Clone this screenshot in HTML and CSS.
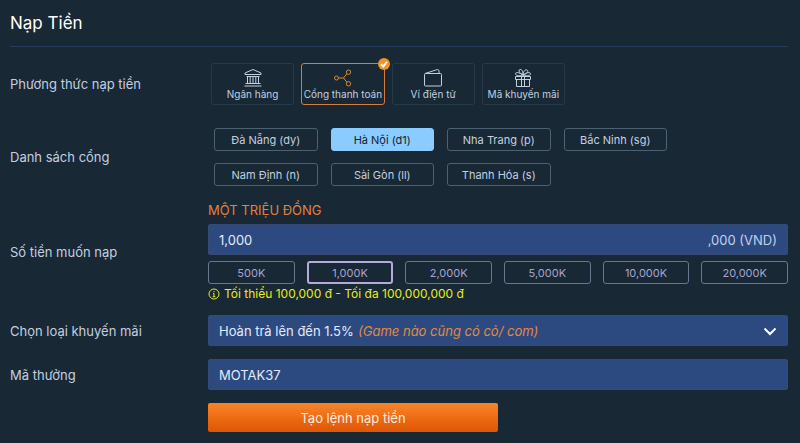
FILE: index.html
```html
<!DOCTYPE html>
<html lang="vi">
<head>
    <meta charset="UTF-8">
    <meta name="viewport" content="width=device-width, initial-scale=1.0">
    <title>Nạp Tiền</title>
    <link rel="stylesheet" href="styles.css">
</head>
<body>
    <form class="deposit">
        <h1 class="title">Nạp Tiền</h1>

        <div class="row">
            <span class="label" id="method-label">Phương thức nạp tiền</span>
            <div class="methods" role="group" aria-labelledby="method-label">
                <button type="button" class="method">
                    <svg class="icon" viewBox="0 0 20 20">
                        <path d="M2 6.500V5l8-3.500L18 5v1.500zM3.500 8.500h13M2.500 15.500h15M1.500 18h17"/>
                        <path d="M4.500 8.500v7M7.200 8.500v7M10 8.500v7M12.800 8.500v7M15.500 8.500v7"/>
                    </svg>
                    Ngân hàng
                </button>
                <button type="button" class="method active">
                    <svg class="icon" viewBox="0 0 20 20">
                        <circle cx="3.500" cy="10" r="2"/>
                        <circle cx="15.500" cy="4.200" r="2.200"/>
                        <circle cx="15.500" cy="15.800" r="2.200"/>
                        <path d="M5.500 10h5l3.400-4.200M10.500 10l3.400 4.200"/>
                    </svg>
                    Cổng thanh toán
                    <svg class="tick" viewBox="0 0 12 12">
                        <circle cx="6" cy="6" r="6"/>
                        <path d="M3 6.200l2.200 2.200L9 3.800"/>
                    </svg>
                </button>
                <button type="button" class="method">
                    <svg class="icon" viewBox="0 0 20 20">
                        <rect x="1.500" y="5.500" width="17" height="12.500" rx="1"/>
                        <path d="M2 5.500L14.500 1.500l1.500 1v3"/>
                    </svg>
                    Ví điện tử
                </button>
                <button type="button" class="method">
                    <svg class="icon" viewBox="0 0 20 20">
                        <path d="M2.500 8.500h15v3h-15zM3.500 11.500v7h13v-7M8.500 8.500v10M11.500 8.500v10"/>
                        <path d="M10 7C7 8 3 8 2.500 6S6 4 10 7zM10 7c3 1 7 1 7.500-1S14 4 10 7z"/>
                        <path d="M10 7C6 5 5 2 7 1.500S10 4 10 7zM10 7c0-3 2-6 4-5s0 4-4 5z"/>
                    </svg>
                    Mã khuyến mãi
                </button>
            </div>
        </div>

        <div class="row row-ports">
            <span class="label" id="port-label">Danh sách cổng</span>
            <div class="ports" role="group" aria-labelledby="port-label">
                <button type="button" class="port">Đà Nẵng (dy)</button>
                <button type="button" class="port active">Hà Nội (d1)</button>
                <button type="button" class="port">Nha Trang (p)</button>
                <button type="button" class="port">Bắc Ninh (sg)</button>
                <button type="button" class="port">Nam Định (n)</button>
                <button type="button" class="port">Sài Gòn (ll)</button>
                <button type="button" class="port">Thanh Hóa (s)</button>
            </div>
        </div>

        <div class="row">
            <label class="label" for="amount">Số tiền muốn nạp</label>
            <div class="amount">
                <p class="words">MỘT TRIỆU ĐỒNG</p>
                <div class="field">
                    <input type="text" id="amount" value="1,000">
                    <span class="unit">,000 (VND)</span>
                </div>
                <div class="chips">
                    <button type="button" class="chip">500K</button>
                    <button type="button" class="chip active">1,000K</button>
                    <button type="button" class="chip">2,000K</button>
                    <button type="button" class="chip">5,000K</button>
                    <button type="button" class="chip">10,000K</button>
                    <button type="button" class="chip">20,000K</button>
                </div>
                <p class="limit">
                    <svg class="info" viewBox="0 0 12 12">
                        <circle cx="6" cy="6" r="5"/>
                        <path d="M6 3v1.200M5 5.500h1v3M4.700 8.700h2.600"/>
                    </svg>
                    Tối thiểu 100,000 đ - Tối đa 100,000,000 đ
                </p>
            </div>
        </div>

        <div class="row">
            <label class="label" for="promo">Chọn loại khuyến mãi</label>
            <div class="field">
                <select id="promo">
                    <option>Hoàn trả lên đến 1.5%</option>
                </select>
                <em class="promo-note">(Game nào cũng có cỏ/ com)</em>
                <svg class="arrow" viewBox="0 0 14 14">
                    <path d="M1.500 4.500L7 10l5.500-5.500"/>
                </svg>
            </div>
        </div>

        <div class="row">
            <label class="label" for="code">Mã thưởng</label>
            <div class="field">
                <input type="text" id="code" value="MOTAK37">
            </div>
        </div>

        <div class="row">
            <button type="submit" class="submit">Tạo lệnh nạp tiền</button>
        </div>
    </form>
</body>
</html>
```

FILE: styles.css
```css
*{
    box-sizing: border-box;
    margin: 0;
    padding: 0;
}
body{
    background: #182835;
    color: #c3d0e0;
    font: 13px/16px Inter, "Liberation Sans", sans-serif;
}
button,
input,
select{
    font: inherit;
    color: inherit;
    background: none;
    border: none;
}
button{
    cursor: pointer;
}
svg{
    fill: none;
    stroke: currentColor;
}
.deposit{
    display: flex;
    flex-direction: column;
    gap: 13px;
    padding: 0 12px 12px 10px;
}
.title{
    height: 47px;
    margin-bottom: 3px;
    border-bottom: 1px solid #263c5a;
    color: #fff;
    font-size: 17px;
    font-weight: 400;
    line-height: 46px;
}
.row{
    display: grid;
    grid-template-columns: 198px 1fr;
    align-items: center;
}

/* payment methods */
.methods{
    display: grid;
    grid-template-columns: repeat(4, 1fr);
    gap: 7px;
    max-width: 357px;
    padding-left: 3px;
}
.method{
    position: relative;
    display: flex;
    flex-direction: column;
    align-items: center;
    height: 42px;
    padding-top: 4px;
    border: 1px solid #263b49;
    border-radius: 3px;
    font-size: 10px;
    line-height: 12px;
    white-space: nowrap;
}
.method.active{
    border-color: #d57c3c;
}
.icon{
    width: 20px;
    height: 20px;
}
.method.active .icon{
    stroke: #d98a2e;
}
.tick{
    position: absolute;
    top: -6px;
    right: -6px;
    width: 12px;
    height: 12px;
    stroke: #fff;
    stroke-width: 2;
}
.tick circle{
    fill: #f3921f;
    stroke: none;
}

/* gateways */
.row-ports{
    padding: 10px 0 3px;
}
.ports{
    display: grid;
    grid-template-columns: repeat(4, 1fr);
    gap: 12px 13px;
    max-width: 459px;
    padding-left: 6px;
}
.port{
    height: 23px;
    border: 1px solid #4a6272;
    border-radius: 3px;
    font-size: 11px;
}
.port.active{
    border-color: #8accff;
    background: #8accff;
    color: #14222e;
}

/* amount */
.words{
    margin-bottom: 6px;
    color: #e5813f;
}
.field{
    display: flex;
    align-items: center;
    height: 31px;
    padding: 0 10px;
    border: 1px solid #354b73;
    border-radius: 2px;
    background: #2d4a80;
    color: #e3ebfa;
}
.field input{
    flex: 1;
    min-width: 0;
    outline: none;
}
.unit{
    color: #c3d0e8;
}
.chips{
    display: grid;
    grid-template-columns: repeat(6, 1fr);
    gap: 12px;
    margin: 6px 0 2px;
}
.chip{
    height: 23px;
    border: 1px solid #6c7590;
    border-radius: 3px;
    color: #a9a3cf;
    font-size: 11px;
}
.chip.active{
    border: 2px solid #b5aadb;
}
.limit{
    display: flex;
    align-items: center;
    gap: 4px;
    color: #e6ee1c;
    font-size: 12px;
}
.info{
    width: 12px;
    height: 12px;
}

/* promotion */
.field select{
    appearance: none;
    outline: none;
}
.promo-note{
    margin-left: 4px;
    color: #e08b3e;
}
.arrow{
    width: 14px;
    height: 14px;
    margin-left: auto;
    color: #fff;
    stroke-width: 2;
}

.submit{
    grid-column: 2;
    width: 50%;
    height: 29px;
    border-radius: 2px;
    background: linear-gradient(#fb8427, #df5504);
    color: #fbeee2;
}
```
